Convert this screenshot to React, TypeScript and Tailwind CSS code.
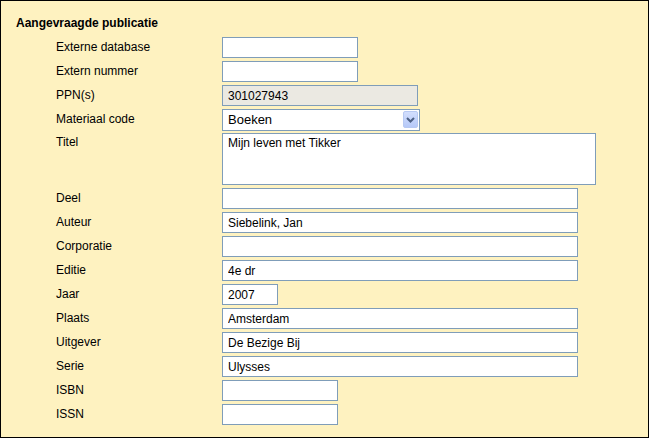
import React from "react";

const inputCls =
  "h-[21px] border border-[#7f9db9] bg-white px-[5px] text-[12px] text-black outline-none font-['Liberation_Sans',Arial,sans-serif]";

function Row({ label, children }: { label: string; children: React.ReactNode }) {
  return (
    <div className="flex items-start pl-[55px]">
      <div className="w-[166px] h-[21px] leading-[21px] text-[12px]">{label}</div>
      {children}
    </div>
  );
}

function Field({ label, w, value = "" }: { label: string; w: string; value?: string }) {
  return (
    <Row label={label}>
      <input readOnly defaultValue={value} className={`${inputCls} ${w}`} />
    </Row>
  );
}

export default function App() {
  return (
    <div className="w-[649px] h-[438px] border border-black bg-[#fef2c0] text-black font-['Liberation_Sans',Arial,sans-serif] overflow-hidden">
      <div className="pl-[15px] pt-[15px] text-[12px] leading-[14px] font-bold">Aangevraagde publicatie</div>
      <div className="mt-[7px] flex flex-col gap-[3px]">
        <Field label="Externe database" w="w-[136px]" />
        <Field label="Extern nummer" w="w-[136px]" />
        <Row label="PPN(s)">
          <input
            readOnly
            defaultValue="301027943"
            className="h-[21px] w-[196px] border border-[#7f9db9] bg-[#ebe9e2] px-[5px] text-[12px] text-black outline-none font-['Liberation_Sans',Arial,sans-serif]"
          />
        </Row>
        <Row label="Materiaal code">
          <div className="flex h-[22px] w-[198px] items-start justify-between border border-[#7f9db9] bg-white">
            <span className="pl-[5px] text-[13px] leading-[20px]">Boeken</span>
            <div className="mt-[1px] mr-[1px] h-[17px] w-[15px] rounded-[2px] border border-[#b7c9f3] bg-gradient-to-b from-[#d2defd] to-[#b6c9f8] flex items-center justify-center">
              <svg width="9" height="6" viewBox="0 0 9 6">
                <path d="M1 1 L4.5 4.5 L8 1" fill="none" stroke="#4d6185" strokeWidth="2" />
              </svg>
            </div>
          </div>
        </Row>
        <div className="-mt-[1px] flex items-start pl-[55px]">
          <div className="w-[166px] h-[21px] leading-[21px] text-[12px] -mt-[1px]">Titel</div>
          <textarea
            readOnly
            defaultValue="Mijn leven met Tikker"
            className="h-[52px] w-[374px] resize-none border border-[#7f9db9] bg-white px-[5px] pt-[2px] text-[12px] leading-[15px] text-black outline-none font-['Liberation_Sans',Arial,sans-serif]"
          />
        </div>
        <Field label="Deel" w="w-[356px]" />
        <Field label="Auteur" w="w-[356px]" value="Siebelink, Jan" />
        <Field label="Corporatie" w="w-[356px]" />
        <Field label="Editie" w="w-[356px]" value="4e dr" />
        <Field label="Jaar" w="w-[56px]" value="2007" />
        <Field label="Plaats" w="w-[356px]" value="Amsterdam" />
        <Field label="Uitgever" w="w-[356px]" value="De Bezige Bij" />
        <Field label="Serie" w="w-[356px]" value="Ulysses" />
        <Field label="ISBN" w="w-[116px]" />
        <Field label="ISSN" w="w-[116px]" />
      </div>
    </div>
  );
}
